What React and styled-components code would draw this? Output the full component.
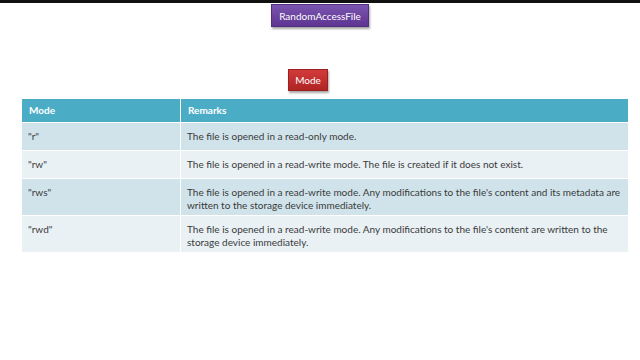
import React from "react";
import styled, { createGlobalStyle } from "styled-components";

const Global = createGlobalStyle`
  html, body { margin: 0; padding: 0; background: #fff; }
  body { width: 640px; height: 360px; overflow: hidden; font-family: Lato, "Open Sans", sans-serif; }
`;

const Page = styled.div`
  width: 640px;
  height: 360px;
  display: flex;
  flex-direction: column;
  align-items: center;
  border-top: 3px solid #111;
  box-sizing: border-box;
`;

const Badge = styled.div`
  margin-top: ${(p) => p.$mt}px;
  margin-right: ${(p) => p.$mr || 0}px;
  height: ${(p) => p.$h}px;
  padding: 0 ${(p) => p.$px}px;
  display: flex;
  align-items: center;
  justify-content: center;
  color: #fff;
  font-size: 10px;
  background: ${(p) => p.$bg};
  border: 1px solid ${(p) => p.$border};
  box-shadow: 1px 2px 2px rgba(0, 0, 0, 0.35);
`;

const Table = styled.div`
  margin-top: 8px;
  align-self: flex-start;
  margin-left: 22px;
  width: 606px;
  display: grid;
  grid-template-columns: 158px 1fr;
  column-gap: 1px;
  row-gap: 1px;
  font-size: 10px;
`;

const Cell = styled.div`
  background: ${(p) => p.$bg};
  height: ${(p) => p.$h}px;
  box-sizing: border-box;
  padding: ${(p) => (p.$head ? "5px 7px 0" : "7px 6px 0")};
  font-weight: ${(p) => (p.$head ? 700 : 400)};
  color: ${(p) => (p.$head ? "#fff" : "#3a3a3a")};
  line-height: 13px;
`;

const rows = [
  ['"r"', "The file is opened in a read-only mode.", 27],
  ['"rw"', "The file is opened in a read-write mode. The file is created if it does not exist.", 27],
  ['"rws"', "The file is opened in a read-write mode. Any modifications to the file's content and its metadata are written to the storage device immediately.", 36],
  ['"rwd"', "The file is opened in a read-write mode. Any modifications to the file's content are written to the storage device immediately.", 36],
];

export default function App() {
  return (
    <>
      <Global />
      <Page>
        <Badge $mt={1} $h={21} $px={7} $bg="linear-gradient(#7b55b0, #5e3592)" $border="#4f2f80">
          RandomAccessFile
        </Badge>
        <Badge $mt={42} $mr={24} $h={20} $px={6} $bg="linear-gradient(#d23a3a, #b02424)" $border="#9c2020">
          Mode
        </Badge>
        <Table>
          <Cell $head $bg="#4bacc6" $h={23}>Mode</Cell>
          <Cell $head $bg="#4bacc6" $h={23}>Remarks</Cell>
          {rows.map(([m, r, h], i) => {
            const bg = i % 2 === 0 ? "#d0e3ea" : "#e9f1f5";
            return (
              <React.Fragment key={m}>
                <Cell $bg={bg} $h={h}>{m}</Cell>
                <Cell $bg={bg} $h={h}>{r}</Cell>
              </React.Fragment>
            );
          })}
        </Table>
      </Page>
    </>
  );
}
